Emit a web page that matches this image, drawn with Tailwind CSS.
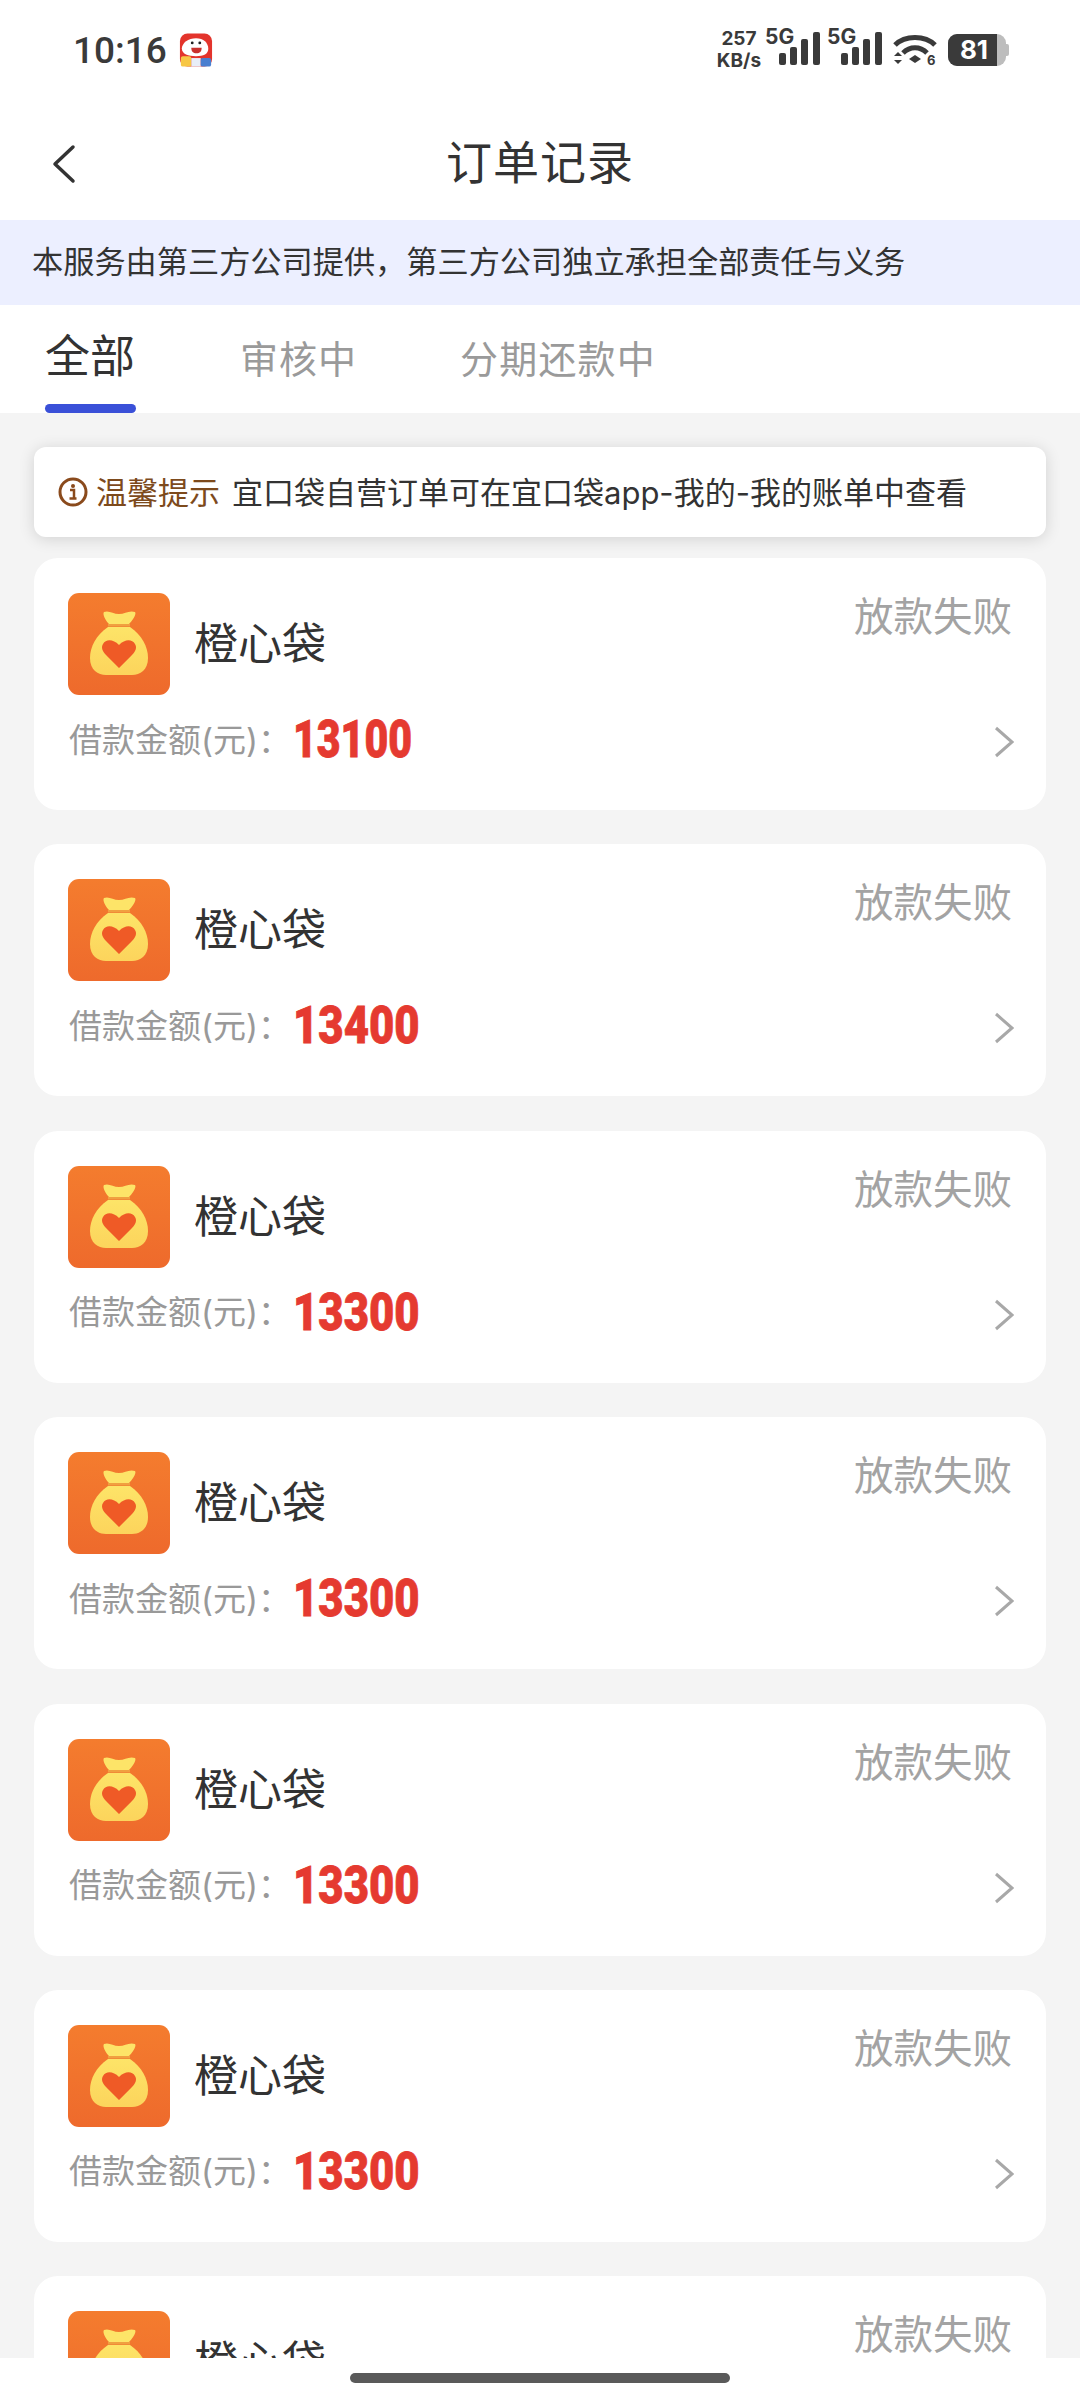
<!DOCTYPE html>
<html lang="zh">
<head>
<meta charset="utf-8">
<title>订单记录</title>
<script src="https://cdn.jsdelivr.net/npm/@tailwindcss/browser@4"></script>
</head>
<body class="bg-white">
<div class="w-[1080px] h-[2400px] overflow-hidden flex flex-col bg-[#f4f4f4] font-['Inter','Noto_Sans_CJK_SC',sans-serif]">

  <!-- status bar -->
  <div class="h-[100px] shrink-0 bg-white flex items-center justify-between pl-[73px] pr-[71px] text-[#3a3a3a]">
    <div class="flex items-center gap-[12px]">
      <span class="text-[37px] font-medium leading-none font-['Roboto',sans-serif]">10:16</span>
      <svg width="34" height="35" viewBox="0 0 36 36">
        <rect width="34" height="35" x="1" rx="8" fill="#e3342c"/>
        <path d="M3 16c0-6 7-11 15-11s13 5 13 11-5 8-13 8-15-2-15-8z" fill="#fff"/>
        <path d="M13 15h11c0 4-2 6-5.500 6s-5.500-2-5.500-6z" fill="#c9302c"/>
        <circle cx="14" cy="10" r="1.5" fill="#222"/><circle cx="22" cy="10" r="1.5" fill="#222"/>
        <rect x="2" y="24" width="11" height="11" rx="2" fill="#f7c744"/>
        <rect x="13" y="26" width="10" height="9" fill="#e8eef8"/>
        <rect x="23" y="26" width="11" height="9" rx="2" fill="#4a7fd0"/>
      </svg>
    </div>
    <div class="flex items-center">
      <div class="flex flex-col items-center text-[19px] font-bold leading-[22px] font-['Inter',sans-serif] w-[46px] mr-[3px]"><span>257</span><span>KB/s</span></div>
      <div class="relative w-[55px] h-[36px]">
        <span class="absolute left-0 top-[-10px] text-[21px] font-bold leading-[30px]">5G</span>
        <svg class="absolute left-[14px] top-0" width="42" height="36" viewBox="0 0 42 36" fill="#3a3a3a"><rect x="0" y="21" width="7" height="12" rx="2"/><rect x="11" y="15" width="7" height="18" rx="2"/><rect x="22" y="7" width="7" height="26" rx="2"/><rect x="34" y="0" width="7" height="33" rx="2"/></svg>
      </div>
      <div class="relative w-[55px] h-[36px] ml-[7px]">
        <span class="absolute left-0 top-[-10px] text-[21px] font-bold leading-[30px]">5G</span>
        <svg class="absolute left-[14px] top-0" width="42" height="36" viewBox="0 0 42 36" fill="#3a3a3a"><rect x="0" y="21" width="7" height="12" rx="2"/><rect x="11" y="15" width="7" height="18" rx="2"/><rect x="22" y="7" width="7" height="26" rx="2"/><rect x="34" y="0" width="7" height="33" rx="2"/></svg>
      </div>
      <svg class="ml-[10px]" width="46" height="36" viewBox="0 0 46 36" fill="none">
        <path d="M3 13C13 3 33 3 43 13" stroke="#3a3a3a" stroke-width="5"/>
        <path d="M11 21C18 14 28 14 35 21" stroke="#3a3a3a" stroke-width="5"/>
        <path d="M17 27l6-4 6 4-6 4z" fill="#3a3a3a"/>
        <path d="M2 24l4-4 4 4zM2 28l4 4 4-4z" fill="#3a3a3a"/>
        <text x="35" y="33" font-size="13" font-weight="700" fill="#3a3a3a" font-family="Inter">6</text>
      </svg>
      <div class="ml-[10px] flex items-center">
        <div class="relative w-[58px] h-[32px] rounded-[9px] overflow-hidden bg-[#bdbdbd]">
          <div class="absolute left-0 top-0 bottom-0 w-[49px] bg-[#3a3a3a]"></div>
          <span class="absolute inset-0 flex items-center justify-center pr-[6px] text-white text-[26px] font-bold leading-none">81</span>
        </div>
        <div class="w-[3px] h-[12px] bg-[#bdbdbd] rounded-r-[2px]"></div>
      </div>
    </div>
  </div>

  <!-- title bar -->
  <div class="h-[120px] shrink-0 bg-white relative flex items-center justify-center">
    <svg class="absolute left-[52px] top-[44px]" width="24" height="40" viewBox="0 0 24 40" fill="none"><path d="M21 3L3 20l18 17" stroke="#333" stroke-width="3.5" stroke-linecap="round" stroke-linejoin="round"/></svg>
    <span class="text-[46px] text-[#333] font-normal tracking-[1px] leading-none mt-[4px]">订单记录</span>
  </div>

  <!-- notice -->
  <div class="h-[85px] shrink-0 bg-[#ecefff] flex items-center pl-[32px] text-[31.2px] text-[#333] leading-none">本服务由第三方公司提供，第三方公司独立承担全部责任与义务</div>

  <!-- tabs -->
  <div class="h-[108px] shrink-0 bg-white flex pl-[45px] relative">
    <div class="relative w-[90px] pt-[29px] text-[45px] leading-none text-[#333]">全部
      <div class="absolute left-0 bottom-0 w-[91px] h-[9px] rounded-full bg-[#3a50d8]"></div>
    </div>
    <div class="ml-[105px] pt-[35px] text-[38px] leading-none text-[#9a9a9a] tracking-[1px]">审核中</div>
    <div class="ml-[103px] pt-[35px] text-[38px] leading-none text-[#9a9a9a] tracking-[1.2px]">分期还款中</div>
  </div>

  <!-- list -->
  <div class="flex-1 min-h-0 overflow-hidden px-[34px] pt-[34px]">
    <div class="h-[90px] mb-[21px] bg-white rounded-[12px] shadow-[0_2px_16px_rgba(0,0,0,0.14)] flex items-center pl-[24px] text-[31px] leading-none">
      <svg width="30" height="30" viewBox="0 0 30 30" fill="none" class="mr-[8px]"><circle cx="15" cy="15" r="13" stroke="#8a4a1c" stroke-width="3"/><circle cx="15" cy="9" r="2" fill="#8a4a1c"/><path d="M12 13h4v8M11.500 21.500h7" stroke="#8a4a1c" stroke-width="2.500"/></svg>
      <span class="text-[#7d4a1c]">温馨提示</span>
      <span class="ml-[12px] text-[#333]">宜口袋自营订单可在宜口袋app-我的-我的账单中查看</span>
    </div>

    <div class="flex flex-col gap-[34.4px]">
      <div class="h-[252px] shrink-0 bg-white rounded-[24px] relative pl-[34px] pt-[35px]">
        <div class="flex items-center">
          <svg width="102" height="102" viewBox="0 0 102 102"><defs><linearGradient id="bg" x1="0" y1="0" x2="0" y2="1"><stop offset="0" stop-color="#f47c2e"/><stop offset="1" stop-color="#ee6a2c"/></linearGradient><linearGradient id="bag" x1="0" y1="0" x2="0" y2="1"><stop offset="0" stop-color="#fde468"/><stop offset="1" stop-color="#fcd45c"/></linearGradient><g id="logo"><rect width="102" height="102" rx="11" fill="url(#bg)"/><path d="M36 19c5-2 9 2 15 2s10-4 16-2c2 2-3 9-6 12H41c-3-3-7-10-5-12z" fill="#fde468"/><rect x="40" y="31" width="22" height="2.500" fill="#f0a040"/><path d="M40 34h22c12 8 18 20 18 31 0 12-8 17-16 17H38c-8 0-16-5-16-17 0-11 6-23 18-31z" fill="url(#bag)"/><path d="M51 75L38 62c-4-4-5-8-3-11 3-5 10-5 16 1 6-6 13-6 16-1 2 3 1 7-3 11z" fill="#ef5a26"/></g></defs><use href="#logo"/></svg>
          <span class="ml-[24px] text-[44px] leading-none text-[#333]">橙心袋</span>
        </div>
        <div class="flex items-center mt-[19px] ml-[1px]">
          <span class="text-[33px] leading-none text-[#999]">借款金额(元)：</span>
          <span class="ml-[2px] text-[52px] leading-none font-black text-[#e53a30] font-['Roboto',sans-serif] [-webkit-text-stroke:0.8px_#e53a30] origin-left scale-x-[0.79]">13100</span>
        </div>
        <span class="absolute right-[34px] top-[40px] text-[39.5px] leading-none text-[#a3a3a3]">放款失败</span>
        <svg class="absolute right-[32px] top-[168px]" width="20" height="32" viewBox="0 0 20 32" fill="none"><path d="M2 2l16 14L2 30" stroke="#a8a8a8" stroke-width="3"/></svg>
      </div>

      <div class="h-[252px] shrink-0 bg-white rounded-[24px] relative pl-[34px] pt-[35px]">
        <div class="flex items-center">
          <svg width="102" height="102" viewBox="0 0 102 102"><use href="#logo"/></svg>
          <span class="ml-[24px] text-[44px] leading-none text-[#333]">橙心袋</span>
        </div>
        <div class="flex items-center mt-[19px] ml-[1px]">
          <span class="text-[33px] leading-none text-[#999]">借款金额(元)：</span>
          <span class="ml-[2px] text-[52px] leading-none font-black text-[#e53a30] font-['Roboto',sans-serif] [-webkit-text-stroke:0.8px_#e53a30] origin-left scale-x-[0.84]">13400</span>
        </div>
        <span class="absolute right-[34px] top-[40px] text-[39.5px] leading-none text-[#a3a3a3]">放款失败</span>
        <svg class="absolute right-[32px] top-[168px]" width="20" height="32" viewBox="0 0 20 32" fill="none"><path d="M2 2l16 14L2 30" stroke="#a8a8a8" stroke-width="3"/></svg>
      </div>

      <div class="h-[252px] shrink-0 bg-white rounded-[24px] relative pl-[34px] pt-[35px]">
        <div class="flex items-center">
          <svg width="102" height="102" viewBox="0 0 102 102"><use href="#logo"/></svg>
          <span class="ml-[24px] text-[44px] leading-none text-[#333]">橙心袋</span>
        </div>
        <div class="flex items-center mt-[19px] ml-[1px]">
          <span class="text-[33px] leading-none text-[#999]">借款金额(元)：</span>
          <span class="ml-[2px] text-[52px] leading-none font-black text-[#e53a30] font-['Roboto',sans-serif] [-webkit-text-stroke:0.8px_#e53a30] origin-left scale-x-[0.84]">13300</span>
        </div>
        <span class="absolute right-[34px] top-[40px] text-[39.5px] leading-none text-[#a3a3a3]">放款失败</span>
        <svg class="absolute right-[32px] top-[168px]" width="20" height="32" viewBox="0 0 20 32" fill="none"><path d="M2 2l16 14L2 30" stroke="#a8a8a8" stroke-width="3"/></svg>
      </div>

      <div class="h-[252px] shrink-0 bg-white rounded-[24px] relative pl-[34px] pt-[35px]">
        <div class="flex items-center">
          <svg width="102" height="102" viewBox="0 0 102 102"><use href="#logo"/></svg>
          <span class="ml-[24px] text-[44px] leading-none text-[#333]">橙心袋</span>
        </div>
        <div class="flex items-center mt-[19px] ml-[1px]">
          <span class="text-[33px] leading-none text-[#999]">借款金额(元)：</span>
          <span class="ml-[2px] text-[52px] leading-none font-black text-[#e53a30] font-['Roboto',sans-serif] [-webkit-text-stroke:0.8px_#e53a30] origin-left scale-x-[0.84]">13300</span>
        </div>
        <span class="absolute right-[34px] top-[40px] text-[39.5px] leading-none text-[#a3a3a3]">放款失败</span>
        <svg class="absolute right-[32px] top-[168px]" width="20" height="32" viewBox="0 0 20 32" fill="none"><path d="M2 2l16 14L2 30" stroke="#a8a8a8" stroke-width="3"/></svg>
      </div>

      <div class="h-[252px] shrink-0 bg-white rounded-[24px] relative pl-[34px] pt-[35px]">
        <div class="flex items-center">
          <svg width="102" height="102" viewBox="0 0 102 102"><use href="#logo"/></svg>
          <span class="ml-[24px] text-[44px] leading-none text-[#333]">橙心袋</span>
        </div>
        <div class="flex items-center mt-[19px] ml-[1px]">
          <span class="text-[33px] leading-none text-[#999]">借款金额(元)：</span>
          <span class="ml-[2px] text-[52px] leading-none font-black text-[#e53a30] font-['Roboto',sans-serif] [-webkit-text-stroke:0.8px_#e53a30] origin-left scale-x-[0.84]">13300</span>
        </div>
        <span class="absolute right-[34px] top-[40px] text-[39.5px] leading-none text-[#a3a3a3]">放款失败</span>
        <svg class="absolute right-[32px] top-[168px]" width="20" height="32" viewBox="0 0 20 32" fill="none"><path d="M2 2l16 14L2 30" stroke="#a8a8a8" stroke-width="3"/></svg>
      </div>

      <div class="h-[252px] shrink-0 bg-white rounded-[24px] relative pl-[34px] pt-[35px]">
        <div class="flex items-center">
          <svg width="102" height="102" viewBox="0 0 102 102"><use href="#logo"/></svg>
          <span class="ml-[24px] text-[44px] leading-none text-[#333]">橙心袋</span>
        </div>
        <div class="flex items-center mt-[19px] ml-[1px]">
          <span class="text-[33px] leading-none text-[#999]">借款金额(元)：</span>
          <span class="ml-[2px] text-[52px] leading-none font-black text-[#e53a30] font-['Roboto',sans-serif] [-webkit-text-stroke:0.8px_#e53a30] origin-left scale-x-[0.84]">13300</span>
        </div>
        <span class="absolute right-[34px] top-[40px] text-[39.5px] leading-none text-[#a3a3a3]">放款失败</span>
        <svg class="absolute right-[32px] top-[168px]" width="20" height="32" viewBox="0 0 20 32" fill="none"><path d="M2 2l16 14L2 30" stroke="#a8a8a8" stroke-width="3"/></svg>
      </div>

      <div class="h-[252px] shrink-0 bg-white rounded-[24px] relative pl-[34px] pt-[35px]">
        <div class="flex items-center">
          <svg width="102" height="102" viewBox="0 0 102 102"><use href="#logo"/></svg>
          <span class="ml-[24px] text-[44px] leading-none text-[#333]">橙心袋</span>
        </div>
        <span class="absolute right-[34px] top-[40px] text-[39.5px] leading-none text-[#a3a3a3]">放款失败</span>
      </div>
    </div>
  </div>

  <!-- gesture bar -->
  <div class="h-[42px] shrink-0 bg-white flex justify-center pt-[15px]">
    <div class="w-[380px] h-[10px] rounded-full bg-[#5a5a5a]"></div>
  </div>
</div>
</body>
</html>
